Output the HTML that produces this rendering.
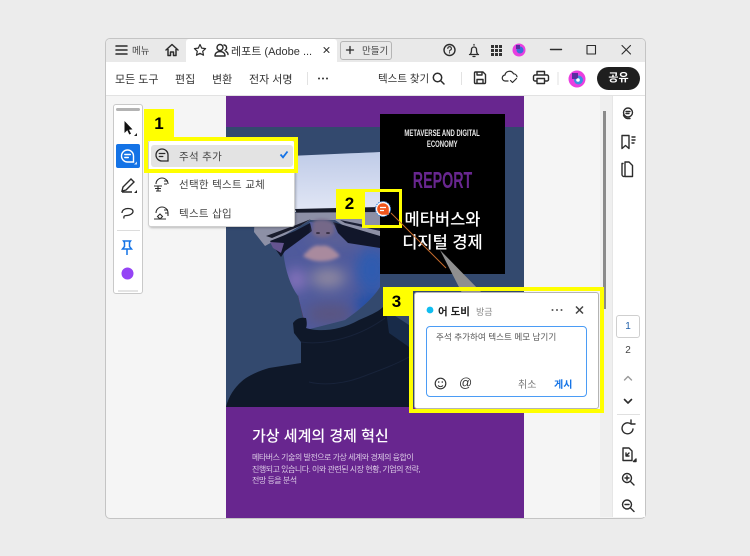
<!DOCTYPE html>
<html lang="ko"><head><meta charset="utf-8"><style>
*{box-sizing:border-box}
html,body{margin:0;padding:0;width:750px;height:556px;overflow:hidden;background:#ececec}
body{position:relative;font-family:"Liberation Sans","Noto Sans CJK KR",sans-serif;color:#333}
.a{position:absolute;white-space:nowrap}
.y{position:absolute;background:#ffff00}
svg{position:absolute;overflow:visible}
.i{fill:none;stroke:#2c2c2c;stroke-width:1.4;stroke-linecap:round;stroke-linejoin:round}
</style></head><body>

<div class="a" style="left:105px;top:38px;width:541px;height:481px;background:#f5f5f5;border:1px solid #c4c4c4;border-radius:5px;overflow:hidden"></div>
<div class="a" style="left:106px;top:39px;width:539px;height:23px;background:#e9e9e9;border-radius:4px 4px 0 0"></div>
<div class="a" style="left:186px;top:39px;width:151px;height:23px;background:#fff;border-radius:3px 3px 0 0"></div>
<div class="a" style="left:106px;top:62px;width:539px;height:34px;background:#fff;border-bottom:1px solid #e2e2e2"></div>
<div class="a" style="left:612px;top:96px;width:33px;height:421px;background:#fff;border-left:1px solid #e6e6e6"></div>
<div class="a" style="left:600px;top:96px;width:12px;height:421px;background:#efefef"></div>
<div class="a" style="left:603px;top:111px;width:3px;height:198px;background:#8a8a8a"></div>

<!-- title bar -->
<svg style="left:0;top:0" width="750" height="100">
<g class="i">
<path d="M116 46h11M116 50h11M116 54h11" stroke-width="1.500"/>
<path d="M166 50l6-5.500 6 5.500M168 49v6.500h2.500v-3.500h3v3.500h2.500v-6.500" stroke-width="1.500"/>
<path d="M200 44.500l1.700 3.600 3.900.5-2.900 2.700.8 3.900-3.500-1.900-3.500 1.900.8-3.900-2.900-2.700 3.900-.5z" stroke-width="1.200"/>
<circle cx="220" cy="47.500" r="3"/><path d="M215 56c0-3 2-4.500 5-4.500s5 1.500 5 4.500h-10z"/><path d="M224 45a2.800 2.800 0 0 1 1 5.300M226 51.500c1.300.7 2 1.800 2 3"/>
<path d="M324 47.500l5 5M329 47.500l-5 5" stroke-width="1"/>
<path d="M350 46.500v7M346.500 50h7" stroke-width="1.300"/>
<circle cx="449.500" cy="50" r="5.500"/><path d="M447.800 48.500a1.800 1.800 0 1 1 2.300 1.700c-.5.200-.6.500-.6 1M449.500 52.700v.3" stroke-width="1.100"/>
<path d="M469.500 54.500h9M470.500 54c1-1.500 1-2.500 1-4.500a2.500 2.500 0 0 1 5 0c0 2 0 3 1 4.500M473 56.500h2M474 44.500v.6" stroke-width="1.300"/>
<path d="M550.500 49.500h11"/><path d="M587 45.500h8.500v8.500h-8.500z" stroke-width="1.100"/><path d="M622 45.500l8.500 8.500M630.500 45.500l-8.500 8.500" stroke-width="1.100"/>
<circle cx="437.500" cy="77.500" r="4.200" stroke-width="1.500"/><path d="M440.500 80.500l3.500 3.500" stroke-width="1.500"/>
<path d="M474.500 73a1 1 0 0 1 1-1h7.500l2.500 2.500v8a1 1 0 0 1-1 1h-9a1 1 0 0 1-1-1zM477 72v3h5v-3M477 83.500v-4h6v4" stroke-width="1.400"/>
<path d="M508 81h-2.500a3 3 0 0 1-.5-6 4.500 4.500 0 0 1 8.500-1.200 3.600 3.600 0 0 1 3.500 3M510.500 80.500l2 2 4-4" stroke-width="1.200"/>
<path d="M537 75v-3.500h7.500v3.500M537 81h-2a1.500 1.500 0 0 1-1.500-1.500v-3a1.500 1.500 0 0 1 1.500-1.500h12a1.500 1.500 0 0 1 1.500 1.500v3a1.500 1.500 0 0 1-1.500 1.500h-2M537 78.500h7.500v5h-7.500z" stroke-width="1.400"/>
</g>
<g fill="#333"><rect x="491" y="45" width="3" height="3"/><rect x="495" y="45" width="3" height="3"/><rect x="499" y="45" width="3" height="3"/><rect x="491" y="49" width="3" height="3"/><rect x="495" y="49" width="3" height="3"/><rect x="499" y="49" width="3" height="3"/><rect x="491" y="53" width="3" height="3"/><rect x="495" y="53" width="3" height="3"/><rect x="499" y="53" width="3" height="3"/>
<circle cx="319" cy="78.500" r="1"/><circle cx="323" cy="78.500" r="1"/><circle cx="327" cy="78.500" r="1"/></g>
<path d="M307.500 72v13M461.500 72v13M558 72v13" stroke="#e2e2e2"/>
<circle cx="519" cy="50" r="6.500" fill="#e83fe0"/><circle cx="520" cy="50" r="3.500" fill="#3a6fd8"/><path d="M516 45h4v4h-4z" fill="#5a2fa0"/>
<circle cx="577" cy="79" r="8.500" fill="#ea3fe0"/><circle cx="578.500" cy="80" r="4.500" fill="#3a8fe0"/><path d="M572 73h6v6h-6z" fill="#5a2fa0"/><circle cx="578" cy="80" r="1.800" fill="#fff"/>
</svg>
<div class="a" style="left:132px;top:43px;font-size:9.500px;color:#444">메뉴</div>
<div class="a" style="left:231px;top:43px;font-size:11px;color:#333">레포트 (Adobe ...</div>
<div class="a" style="left:340px;top:41px;width:52px;height:19px;border:1px solid #b5b5b5;border-radius:3px"></div>
<div class="a" style="left:362px;top:43px;font-size:9.500px;color:#444">만들기</div>

<div class="a" style="left:115px;top:71px;font-size:11px;color:#333">모든 도구</div>
<div class="a" style="left:175px;top:71px;font-size:11px;color:#333">편집</div>
<div class="a" style="left:212px;top:71px;font-size:11px;color:#333">변환</div>
<div class="a" style="left:249px;top:71px;font-size:11px;color:#333">전자 서명</div>
<div class="a" style="left:378px;top:71px;font-size:10.500px;color:#333">텍스트 찾기</div>
<div class="a" style="left:597px;top:67px;width:43px;height:23px;background:#1f1f1f;border-radius:12px;color:#fff;font-size:11px;font-weight:700;text-align:center;line-height:23px">공유</div>

<!-- PDF page -->
<div class="a" style="left:226px;top:96px;width:298px;height:422px;background:#68268f"></div>
<svg style="left:226px;top:127px;overflow:hidden" width="298" height="280" viewBox="226 127 298 280">
<defs>
<linearGradient id="vi" x1="0" y1="0" x2="0" y2="1"><stop offset="0" stop-color="#bfcbe8"/><stop offset="1" stop-color="#e2e7f5"/></linearGradient>
<filter id="b6" x="-50%" y="-50%" width="200%" height="200%"><feGaussianBlur stdDeviation="7"/></filter>
<filter id="b1" x="-20%" y="-20%" width="140%" height="140%"><feGaussianBlur stdDeviation="1.500"/></filter>
<clipPath id="fc"><path d="M283 250L310 222L335 225L380 244V287C375 295 365 306 345 320L306 330L298 296C290 285 285 270 283 250z"/></clipPath>
</defs>
<rect x="226" y="127" width="298" height="280" fill="#33496e"/>
<!-- visor -->
<path d="M238 160C270 156 340 154 380 152V212H235z" fill="url(#vi)"/>
<path d="M295 209L380 207V212L297 214z" fill="#171b2a"/>
<!-- face with soft colour patches -->
<g clip-path="url(#fc)">
<rect x="280" y="220" width="105" height="115" fill="#4f5a9c"/>
<g filter="url(#b6)">
<ellipse cx="296" cy="280" rx="8" ry="11" fill="#9478c4"/>
<ellipse cx="328" cy="278" rx="18" ry="10" fill="#8f88a0"/>
<ellipse cx="372" cy="270" rx="16" ry="22" fill="#2f5cb0"/>
<ellipse cx="335" cy="238" rx="30" ry="7" fill="#5f6294"/>
<ellipse cx="330" cy="314" rx="24" ry="10" fill="#5a5480"/>
<ellipse cx="372" cy="306" rx="18" ry="12" fill="#1c4fa8"/>
</g>
<path d="M298 295C300 305 303 315 306 328L296 325z" fill="#5a3048"/>
</g>
<!-- goggles -->
<path d="M255 213L380 212V240L347 228L335 220H310L285 235L265 246L254 232z" fill="#8d90a6"/>
<path d="M266 236L296 225L311 219L300 226L272 238z" fill="#1a1d2d"/>
<path d="M270 241L295 231L310 223L312 231L300 240L285 251L281 257L276 250z" fill="#11162a"/>
<path d="M333 222L380 236V248L348 243L338 233z" fill="#11162a"/>
<path d="M340 220L380 228V231L345 223z" fill="#1d2136"/>
<path d="M270 242L284 243L281 253L273 248z" fill="#655490"/>
<!-- nose and lips -->
<path d="M313 222C316 218 330 218 334 224V233C328 239 317 239 312 233z" fill="#746888" filter="url(#b1)"/>
<ellipse cx="318" cy="233" rx="2" ry="1" fill="#3a3248"/><ellipse cx="328" cy="233" rx="2" ry="1" fill="#3a3248"/>
<path d="M303 256C310 248 315 244 321 246C327 244 334 249 340 256C332 262 314 264 303 256z" fill="#a98a9e" filter="url(#b1)"/>
<!-- sweater -->
<path d="M293 323C296 319 300 317 306 318C307 322 307 326 306 328C318 332 340 331 359 320C370 315 378 312 383 307L409 330V407H226C229 395 236 385 246 378C254 373 262 370 269 368L301 363V342L294 333z" fill="#0f1829"/>
<path d="M386 310L409 325V347L389 333z" fill="#182b49"/>
<path d="M301 342C320 345 355 340 385 318M309 382C325 386 345 383 359 378C375 372 395 365 409 357" stroke="#18233a" fill="none"/>
</svg>
<div class="a" style="left:380px;top:114px;width:125px;height:160px;background:#000"></div>
<div class="a" style="left:380px;top:128px;width:125px;text-align:center;font-size:9px;line-height:11px;font-weight:700;color:#e8e8e8;white-space:normal"><span style="display:inline-block;white-space:nowrap;transform:scaleX(.66)">METAVERSE AND DIGITAL</span><br><span style="display:inline-block;transform:scaleX(.66)">ECONOMY</span></div>
<div class="a" style="left:380px;top:165px;width:125px;text-align:center;font-size:23px;line-height:30px;font-weight:700;color:#68268f;transform:scaleX(.62)">REPORT</div>
<div class="a" style="left:380px;top:209px;width:125px;text-align:center;font-size:16.500px;line-height:22.500px;font-weight:500;color:#fff">메타버스와<br>디지털 경제</div>
<div class="a" style="left:252px;top:425px;font-size:15px;font-weight:500;color:#fff">가상 세계의 경제 혁신</div>
<div class="a" style="left:252px;top:452px;font-size:8px;line-height:11.700px;color:#dccbe6;letter-spacing:-.5px">메타버스 기술의 발전으로 가상 세계와 경제의 융합이<br>진행되고 있습니다. 이와 관련된 시장 현황, 기업의 전략,<br>전망 등을 분석</div>

<!-- left tool panel -->
<div class="a" style="left:113px;top:104px;width:30px;height:190px;background:#fff;border:1px solid #c9c9c9;border-radius:3px"></div>
<div class="a" style="left:116px;top:108px;width:24px;height:3px;background:#b3b3b3;border-radius:2px"></div>
<div class="a" style="left:116px;top:144px;width:24px;height:24px;background:#1473e6;border-radius:2px"></div>
<svg style="left:0;top:0" width="750" height="556">
<path d="M124.500 121v12l2.800-2.700 2 4.200 1.700-.8-2-4 3.500-.3z" fill="#111"/>
<path d="M137 133l-3 3h3zM137 190l-3 3h3z" fill="#222"/>
<path d="M137 161.500l-3 3h3z" fill="#cfe2fb"/>
<path d="M121.500 156a6 6 0 0 1 12 0v6h-6a6 6 0 0 1-6-6zM124.800 154.500h5.500M124.800 157.500h3.500" fill="none" stroke="#fff" stroke-width="1.400" stroke-linecap="round"/>
<path d="M123 187l8-8 3 3-8 8-4 1zM122 192h10" fill="none" stroke="#2c2c2c" stroke-width="1.400"/>
<path d="M122 213c0-3 3-4.500 6-4.500s5 1 5 3-3 4-6.500 4c-2 0-3 .5-2.500 3" fill="none" stroke="#2c2c2c" stroke-width="1.300"/>
<path d="M117 230.500h23" stroke="#dcdcdc"/>
<path d="M123.500 241h7l-1 1.500v4l2 2.500h-9l2-2.500v-4zM127 249v6" fill="none" stroke="#1473e6" stroke-width="1.500"/>
<circle cx="127.500" cy="273.500" r="6" fill="#9544f5"/>
<path d="M118 291h20" stroke="#dcdcdc" stroke-width="1.500"/>
</svg>

<!-- dropdown -->
<div class="a" style="left:148px;top:140px;width:147px;height:87px;background:#fff;border:1px solid #cfcfcf;border-radius:3px;box-shadow:1px 1px 2px rgba(0,0,0,.25)"></div>
<div class="y" style="left:144px;top:109px;width:30px;height:28px"></div>
<div class="a" style="left:144px;top:109px;width:30px;height:28px;text-align:center;font-size:17px;font-weight:700;color:#000;line-height:30px">1</div>
<div class="a" style="left:144px;top:137px;width:154px;height:36px;border:4px solid #ffff00"></div>
<div class="a" style="left:151px;top:145px;width:142px;height:22px;background:#e3e3e3;border-radius:3px"></div>
<svg style="left:0;top:0" width="750" height="556">
<path d="M156 155a6 6 0 0 1 12 0v6h-6a6 6 0 0 1-6-6zM159.300 153.500h5.500M159.300 156.500h3.500" fill="none" stroke="#2c2c2c" stroke-width="1.300" stroke-linecap="round"/>
<path d="M280.500 154.500l2.500 2.800 4.500-5.800" fill="none" stroke="#1473e6" stroke-width="1.800"/>
<path d="M156 184a6 6 0 0 1 12 0M154 186h8M155 188.500h6M156 191h5M158 186v5M164 181h4M164 184h3" fill="none" stroke="#2c2c2c" stroke-width="1.100"/>
<path d="M156 213a6 6 0 0 1 12 0v3M154 219h12M160 214l2.500 2.500-2.500 2.500-2.500-2.500zM164 210h4M165 213h3" fill="none" stroke="#2c2c2c" stroke-width="1.100"/>
</svg>
<div class="a" style="left:179px;top:149px;font-size:10.500px;color:#444;letter-spacing:.3px">주석 추가</div>
<div class="a" style="left:179px;top:177px;font-size:10.500px;color:#444;letter-spacing:.3px">선택한 텍스트 교체</div>
<div class="a" style="left:179px;top:206px;font-size:10.500px;color:#444;letter-spacing:.3px">텍스트 삽입</div>

<!-- marker 2 -->
<div class="y" style="left:336px;top:189px;width:27px;height:30px"></div>
<div class="a" style="left:336px;top:189px;width:27px;height:30px;text-align:center;font-size:17px;font-weight:700;color:#000;line-height:30px">2</div>
<div class="a" style="left:362px;top:189px;width:40px;height:39px;border:3px solid #ffff00"></div>
<svg style="left:0;top:0" width="750" height="556">
<path d="M440 250L482 293L462 293z" fill="#8f8f8f"/>
<path d="M391 213L446 268" stroke="#c76a2b" stroke-width="1"/>
<circle cx="383" cy="209" r="7.500" fill="#fff" stroke="#3b83d8" stroke-dasharray="1.500 1"/>
<path d="M377.200 209a5.800 5.800 0 0 1 11.600 0v5.800h-5.800a5.800 5.800 0 0 1-5.800-5.800z" fill="#f0561d"/>
<path d="M380 207.500h6M380 210.500h4" stroke="#fff" stroke-width="1.200"/>
</svg>

<!-- comment 3 -->
<div class="y" style="left:383px;top:287px;width:27px;height:29px"></div>
<div class="a" style="left:383px;top:287px;width:27px;height:29px;text-align:center;font-size:17px;font-weight:700;color:#000;line-height:29px">3</div>
<div class="a" style="left:409px;top:287px;width:195px;height:126px;border:4px solid #ffff00"></div>
<div class="a" style="left:414px;top:292px;width:185px;height:117px;background:#fff;border:1px solid #b4b4b4;border-radius:3px"></div>
<svg style="left:0;top:0" width="750" height="556">
<circle cx="430" cy="310" r="3.400" fill="#10bdf0"/>
<g fill="#555"><circle cx="552.500" cy="310" r="1"/><circle cx="557" cy="310" r="1"/><circle cx="561.500" cy="310" r="1"/></g>
<path d="M576 306.500l7 7M583 306.500l-7 7" stroke="#444" stroke-width="1.500"/>
<circle cx="440.500" cy="383.500" r="5.300" fill="none" stroke="#333" stroke-width="1.200"/><path d="M438 385.500c1.500 1.500 3.500 1.500 5 0" stroke="#333" fill="none"/><circle cx="438.700" cy="382" r=".8" fill="#333"/><circle cx="442.300" cy="382" r=".8" fill="#333"/>
</svg>
<div class="a" style="left:438px;top:304px;font-size:10.500px;font-weight:700;color:#222">어 도비</div>
<div class="a" style="left:476px;top:305px;font-size:9px;color:#888">방금</div>
<div class="a" style="left:426px;top:326px;width:161px;height:71px;border:1px solid #4b9cf5;border-radius:4px"></div>
<div class="a" style="left:436px;top:331px;font-size:8.600px;color:#555">주석 추가하여 텍스트 메모 남기기</div>
<div class="a" style="left:459px;top:375px;font-size:13px;color:#333">@</div>
<div class="a" style="left:518px;top:376px;font-size:10px;color:#777">취소</div>
<div class="a" style="left:554px;top:376px;font-size:10px;font-weight:700;color:#1473e6">게시</div>

<!-- right sidebar -->
<svg style="left:0;top:0" width="750" height="556">
<g class="i" stroke-width="1.200">
<circle cx="628" cy="112.500" r="4.500"/><path d="M623.500 115a5.500 5.500 0 0 0 3.500 3.500h3M626 111.500h4M626 113.500h3"/>
<path d="M622 135.500h7v13l-3.500-3-3.500 3zM632 137h3M632 140h3M632 143h2"/>
<path d="M623 163.500h-1v11a2 2 0 0 0 2 2M625 162h4l3.500 3.500v11h-7.500z"/>
<path d="M624.500 380l3.500-3.500 3.500 3.500" stroke="#999"/>
<path d="M624.500 399.500l3.500 3.500 3.500-3.500" stroke-width="1.600"/>
<path d="M633 429a5.500 5.500 0 1 1-2-5M631 420v4h4"/>
<path d="M623 448h6l3 3v9.500h-9zM626 456l3-3M626 453v3h3"/>
<path d="M636 459l-2.500 2.500h2.500z" fill="#222"/>
<circle cx="627" cy="478" r="4.500"/><path d="M630.500 481.500l3.500 3.500M625 478h4M627 476v4"/>
<circle cx="627" cy="504.500" r="4.500"/><path d="M630.500 508l3.500 3.500M625 504.500h4"/>
</g>
<path d="M617 414.500h23" stroke="#e0e0e0"/>
</svg>
<div class="a" style="left:616px;top:315px;width:24px;height:23px;border:1px solid #cfcfcf;border-radius:3px;text-align:center;font-size:10px;line-height:22px;color:#1f5fa8">1</div>
<div class="a" style="left:616px;top:345px;width:24px;text-align:center;font-size:10px;color:#444">2</div>
</body></html>
